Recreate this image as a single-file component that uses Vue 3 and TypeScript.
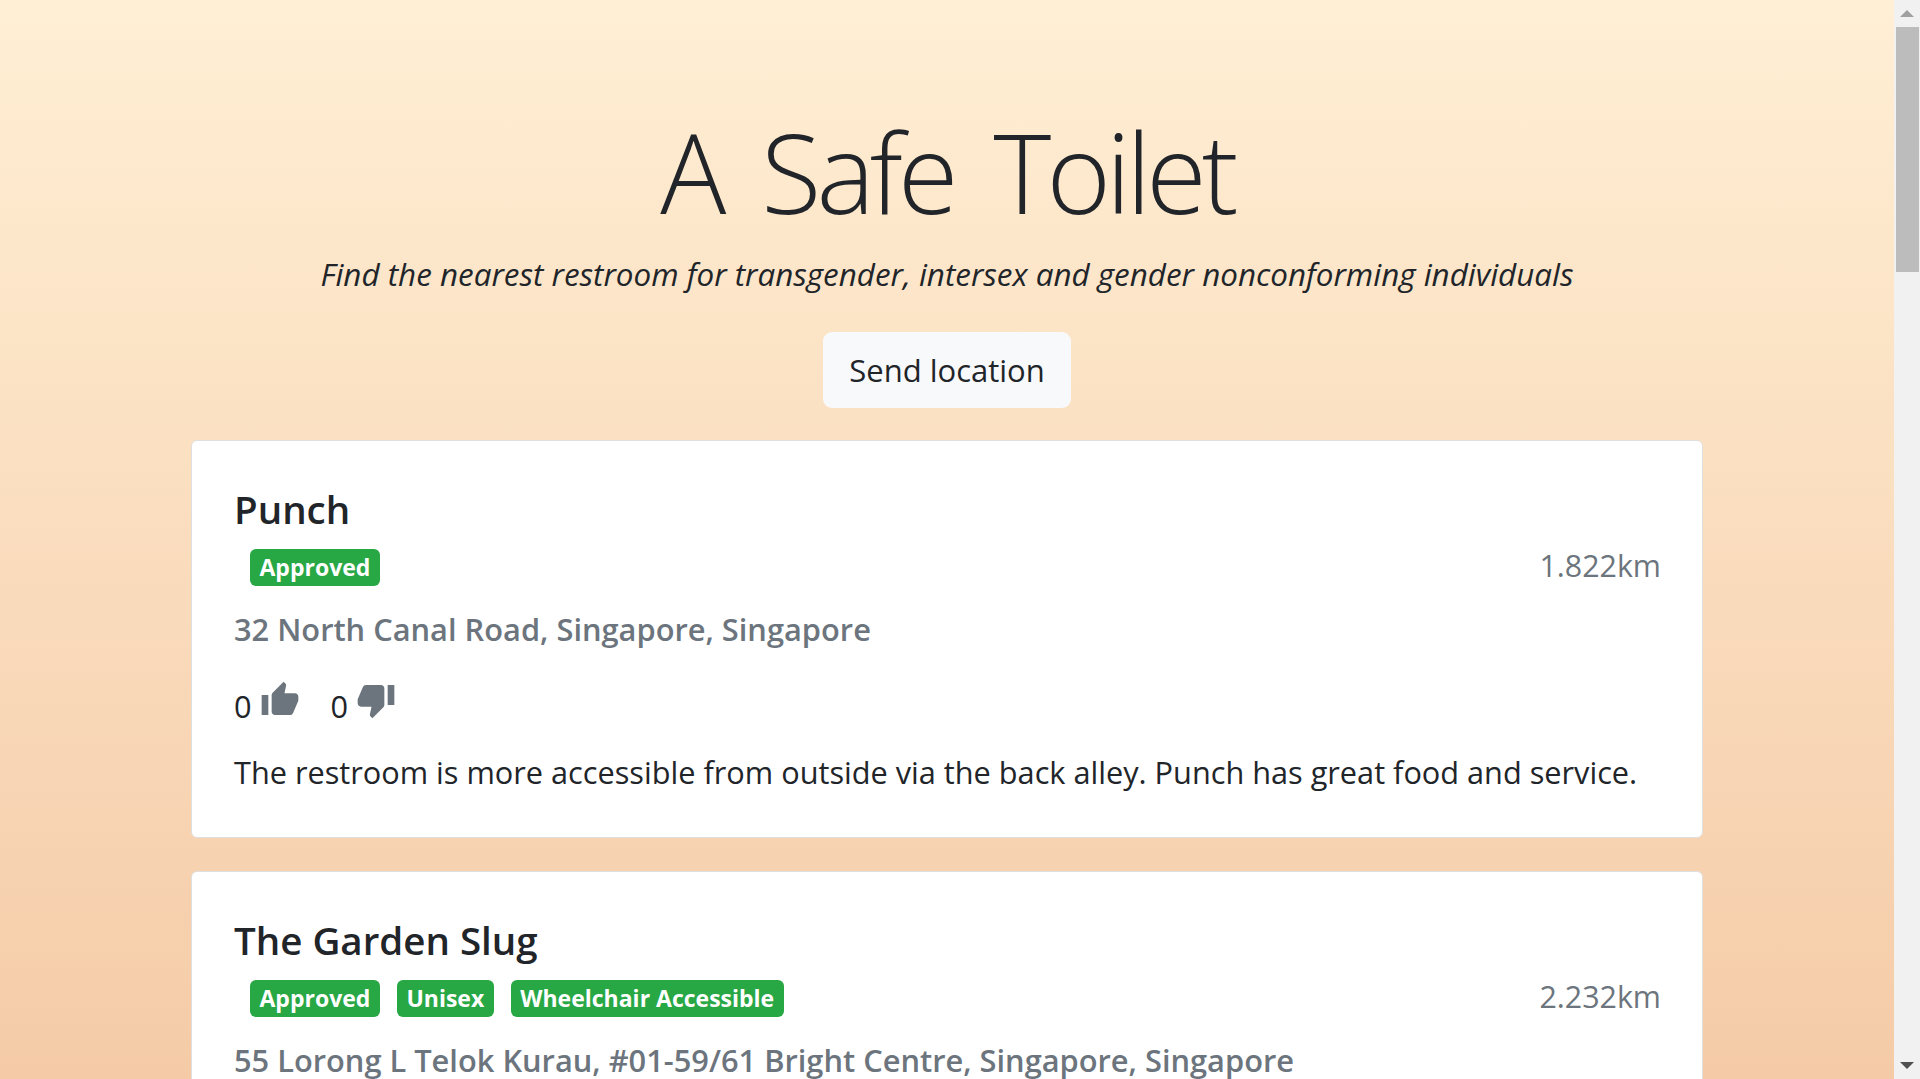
<template>
  <div class="screen">
    <main class="page">
      <header class="hero">
        <h1 class="hero__title">A Safe Toilet</h1>
        <p class="hero__lead">Find the nearest restroom for transgender, intersex and gender nonconforming individuals</p>
        <button type="button" class="hero__btn">Send location</button>
      </header>

      <article v-for="place in places" :key="place.name" class="card">
        <h2 class="card__title">{{ place.name }}</h2>
        <div class="card__meta">
          <div class="card__tags">
            <span v-for="tag in place.tags" :key="tag" class="badge">{{ tag }}</span>
          </div>
          <span class="card__dist">{{ place.distance }}</span>
        </div>
        <h3 class="card__address">{{ place.address }}</h3>
        <div class="card__votes">
          <span class="vote">
            0
            <svg class="vote__icon" viewBox="0 0 24 24"><path d="M1 21h4V9H1v12zm22-11c0-1.1-.9-2-2-2h-6.31l.95-4.57.03-.32c0-.41-.17-.79-.44-1.06L14.17 1 7.59 7.59C7.22 7.95 7 8.45 7 9v10c0 1.1.9 2 2 2h9c.83 0 1.54-.5 1.84-1.22l3.02-7.05c.09-.23.14-.47.14-.73v-2z" /></svg>
          </span>
          <span class="vote">
            0
            <svg class="vote__icon" viewBox="0 0 24 24"><path d="M15 3H6c-.83 0-1.54.5-1.84 1.22l-3.02 7.05c-.09.23-.14.47-.14.73v2c0 1.1.9 2 2 2h6.31l-.95 4.57-.03.32c0 .41.17.79.44 1.06L9.83 23l6.59-6.59c.36-.36.58-.86.58-1.41V5c0-1.1-.9-2-2-2zm4 0v12h4V3h-4z" /></svg>
          </span>
        </div>
        <p class="card__desc">{{ place.description }}</p>
      </article>
    </main>

    <aside class="scrollbar">
      <div class="scrollbar__btn"><span class="arrow arrow--up"></span></div>
      <div class="scrollbar__thumb"></div>
      <div class="scrollbar__track"></div>
      <div class="scrollbar__btn"><span class="arrow arrow--down"></span></div>
    </aside>
  </div>
</template>

<script setup lang="ts">
interface Place {
  name: string;
  tags: string[];
  distance: string;
  address: string;
  description: string;
}

const places: Place[] = [
  {
    name: 'Punch',
    tags: ['Approved'],
    distance: '1.822km',
    address: '32 North Canal Road, Singapore, Singapore',
    description: 'The restroom is more accessible from outside via the back alley. Punch has great food and service.',
  },
  {
    name: 'The Garden Slug',
    tags: ['Approved', 'Unisex', 'Wheelchair Accessible'],
    distance: '2.232km',
    address: '55 Lorong L Telok Kurau, #01-59/61 Bright Centre, Singapore, Singapore',
    description: '',
  },
];
</script>

<style>
html,
body {
  margin: 0;
  overflow: hidden;
}
</style>

<style scoped>
.screen {
  display: flex;
  height: 1079px;
  overflow: hidden;
  font-family: "Open Sans", "Noto Sans", sans-serif;
  color: #212529;
}

.page {
  flex: 1;
  min-width: 0;
  overflow: hidden;
  padding: 0 191px;
  background: linear-gradient(180deg, #ffefd5 0%, #f5cba7 100%);
}

.hero {
  display: flex;
  flex-direction: column;
  align-items: center;
  padding-top: 94px;
  margin-bottom: 32px;
}

.hero__title {
  margin: 0;
  font-size: 110px;
  font-weight: 300;
  letter-spacing: -4.8px;
  word-spacing: 16px;
  line-height: 154px;
}

.hero__lead {
  margin: 3px 0 36px;
  font-size: 31.4px;
  font-style: italic;
  line-height: 45px;
}

.hero__btn {
  height: 76px;
  padding: 0 26px;
  border: 0;
  border-radius: 9px;
  background: #f8f9fa;
  color: #212529;
  font-family: inherit;
  font-size: 31px;
}

.card {
  padding: 43px 41px 42px 42px;
  margin-bottom: 33px;
  background: #fff;
  border: 1px solid #dfdfdf;
  border-radius: 6px;
}

.card__title {
  margin: 0;
  font-size: 38.5px;
  font-weight: 600;
  line-height: 50px;
}

.card__meta {
  display: flex;
  justify-content: space-between;
  align-items: flex-start;
  margin-top: 13px;
}

.card__tags {
  display: flex;
  gap: 17px;
  padding: 2px 0 2px 16px;
}

.badge {
  padding: 0 9.5px;
  border-radius: 6px;
  background: #28a745;
  color: #fff;
  font-size: 23px;
  font-weight: 700;
  line-height: 37px;
}

.card__dist {
  color: #6c757d;
  font-size: 30.4px;
  line-height: 37px;
}

.card__address {
  margin: 19px 0 0;
  color: #6c757d;
  font-size: 30.8px;
  font-weight: 600;
  line-height: 45px;
}

.card__votes {
  display: flex;
  gap: 31px;
  margin-top: 32px;
}

.vote {
  display: flex;
  align-items: flex-end;
  gap: 8px;
  font-size: 30.7px;
  line-height: 45px;
}

.vote__icon {
  align-self: flex-start;
  width: 40px;
  height: 40px;
  margin-top: -4px;
  fill: #6c757d;
}

.card__desc {
  margin: 21px 0 0;
  font-size: 30.7px;
  line-height: 45px;
}

.scrollbar {
  display: flex;
  flex-direction: column;
  flex: none;
  width: 26px;
  background: #f1f1f1;
}

.scrollbar__btn {
  display: flex;
  align-items: center;
  justify-content: center;
  height: 27px;
}

.scrollbar__thumb {
  height: 245px;
  margin: 0 1px 0 2px;
  background: #bcbcbc;
}

.scrollbar__track {
  flex: 1;
}

.arrow {
  width: 0;
  height: 0;
  border-left: 7px solid transparent;
  border-right: 7px solid transparent;
}

.arrow--up {
  border-bottom: 7px solid #a0a0a0;
}

.arrow--down {
  border-top: 7px solid #505050;
}
</style>
